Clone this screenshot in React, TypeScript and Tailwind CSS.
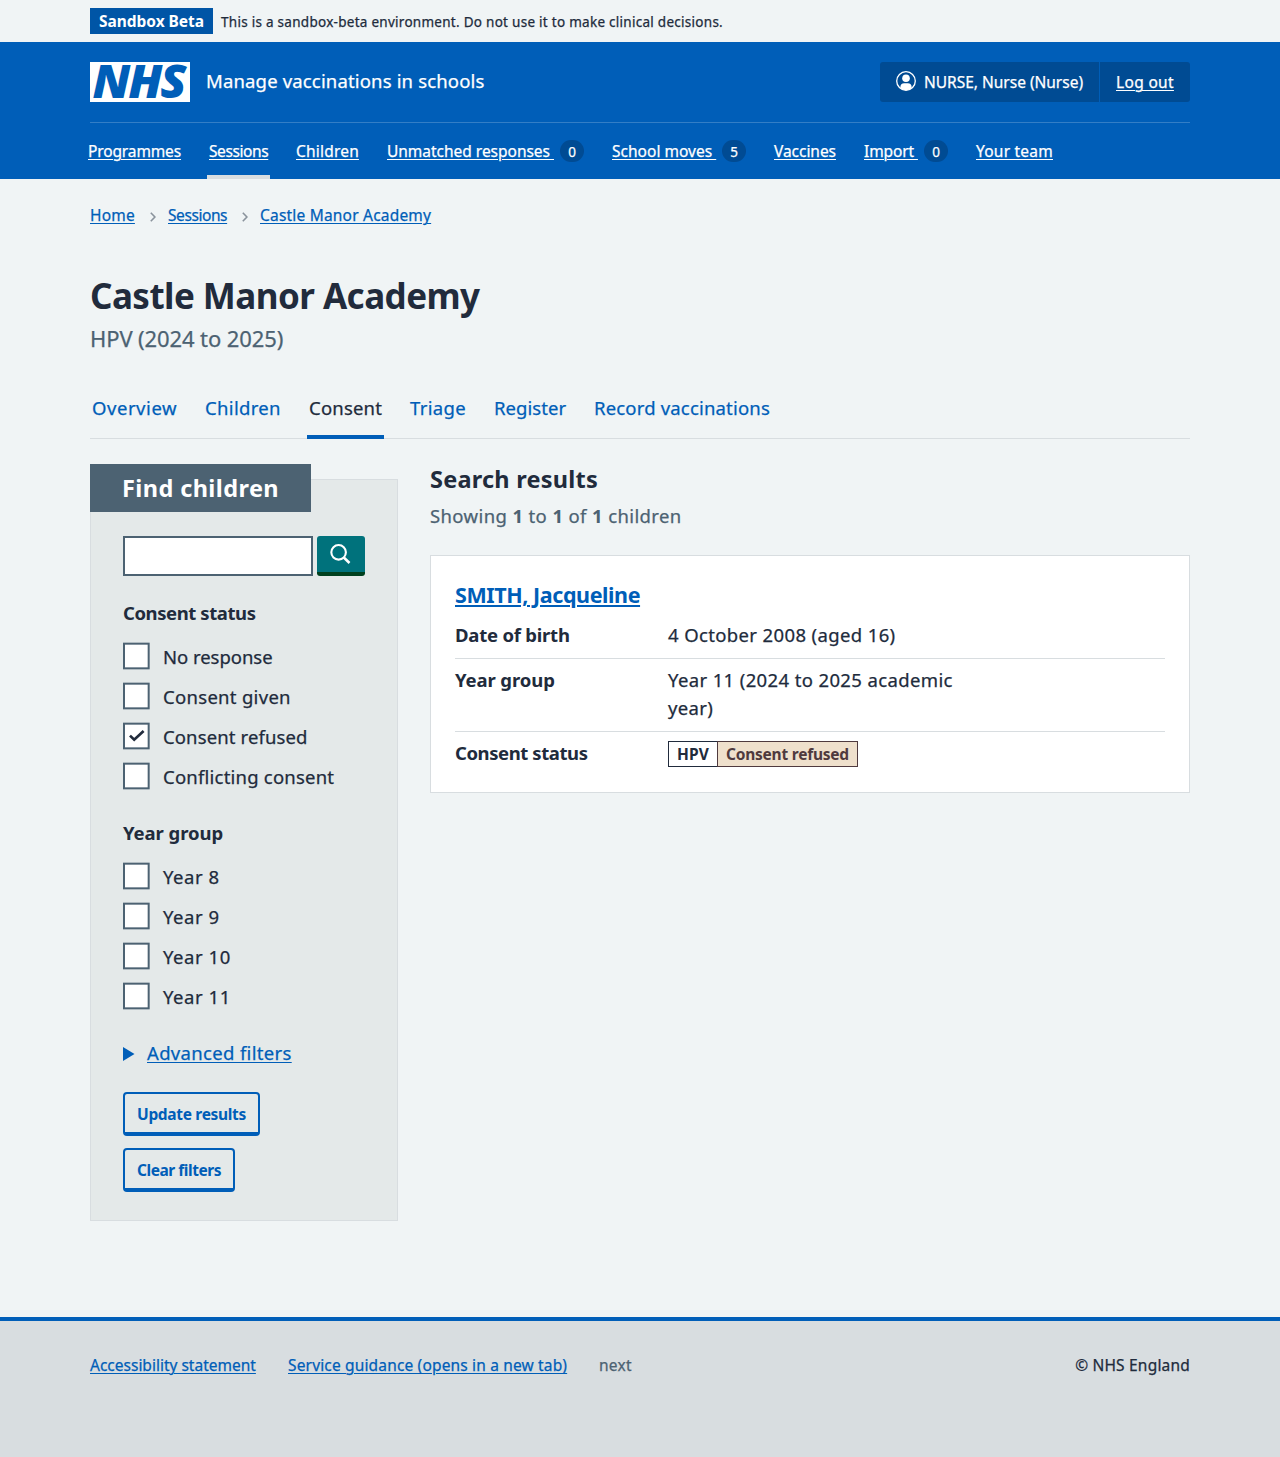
import type { ReactNode } from "react";

type NavItem = { label: string; cls: string; width: string; count?: number; current?: boolean };

const NAV: NavItem[] = [
  { label: "Programmes", cls: "tracking-[-0.13px]", width: "w-[97px]" },
  { label: "Sessions", cls: "tracking-[-0.4px]", width: "w-[63px]", current: true },
  { label: "Children", cls: "tracking-[0.2px]", width: "w-[67px]" },
  { label: "Unmatched responses\u00a0", cls: "tracking-[-0.02px]", width: "w-[201px]", count: 0 },
  { label: "School moves\u00a0", cls: "tracking-[0.02px]", width: "w-[138px]", count: 5 },
  { label: "Vaccines", cls: "tracking-[-0.04px]", width: "w-[66px]" },
  { label: "Import\u00a0", cls: "tracking-[-0.11px]", width: "w-[88px]", count: 0 },
  { label: "Your team", cls: "tracking-[0.23px]", width: "w-[81px]" },
];

const TABS = [
  { label: "Overview", cls: "w-[89px] tracking-[0.55px]" },
  { label: "Children", cls: "w-[80px] tracking-[0.33px]" },
  { label: "Consent", cls: "w-[77px] tracking-[0.2px]", current: true },
  { label: "Triage", cls: "w-[60px] tracking-[0.34px]" },
  { label: "Register", cls: "w-[76px] tracking-[0.05px]" },
  { label: "Record vaccinations", cls: "w-[180px] tracking-[0.18px]" },
];

const STATUSES = [
  { label: "No response", cls: "tracking-[-0.03px]" },
  { label: "Consent given", cls: "tracking-[0.3px]" },
  { label: "Consent refused", cls: "tracking-[0.12px]", checked: true },
  { label: "Conflicting consent", cls: "tracking-[0.22px]" },
];

const YEARS = ["Year 8", "Year 9", "Year 10", "Year 11"].map((label) => ({
  label,
  cls: "tracking-[0.55px]",
  checked: false,
}));

const link = "underline decoration-1 underline-offset-2";

function Container({ children, className = "" }: { children: ReactNode; className?: string }) {
  return <div className={`mx-auto w-[1100px] ${className}`}>{children}</div>;
}

function NhsLogo() {
  return (
    <svg width="100" height="40" viewBox="0 0 100 40" role="img" aria-label="NHS" className="bg-white">
      <text
        x="2.5"
        y="36.4"
        fontFamily="'Open Sans', sans-serif"
        fontWeight="800"
        fontStyle="italic"
        fontSize="46"
        letterSpacing="-2"
        textLength="92"
        lengthAdjust="spacingAndGlyphs"
        fill="#005eb8"
      >
        NHS
      </text>
    </svg>
  );
}

function Checkbox({ label, cls, checked }: { label: string; cls: string; checked?: boolean }) {
  return (
    <label className="flex h-10 items-center">
      <svg width="28" height="28" viewBox="0 0 28 28" className="-ml-px mb-[2px] shrink-0">
        <rect x="2" y="1.67" width="24.67" height="24.67" fill="#fff" stroke="#4c6272" strokeWidth="2" />
        {checked && <path d="M8 13.6l4.2 4.1L21.6 9" fill="none" stroke="#212b3c" strokeWidth="2.7" />}
      </svg>
      <span className={`ml-[13px] text-[18.5px] leading-7 ${cls}`}>{label}</span>
    </label>
  );
}

function CheckboxGroup({ title, cls, items }: { title: string; cls: string; items: { label: string; cls: string; checked?: boolean }[] }) {
  return (
    <fieldset className="mb-[22px]">
      <legend className={`mb-[10px] text-[18.5px] font-bold leading-7 ${cls}`}>{title}</legend>
      {items.map((item) => (
        <Checkbox key={item.label} {...item} />
      ))}
    </fieldset>
  );
}

function SummaryRow({ term, cls, last, children }: { term: string; cls: string; last?: boolean; children: ReactNode }) {
  return (
    <div className={`flex text-[18.5px] leading-7 ${last ? "" : "border-b border-[#d8dde0] pb-[9px]"}`}>
      <dt className={`w-[213px] font-bold ${cls}`}>{term}</dt>
      <dd className="w-[298px]">{children}</dd>
    </div>
  );
}

export default function App() {
  return (
    <div className="flex min-h-[1457px] flex-col whitespace-nowrap bg-[#f0f4f5] font-['Noto_Sans',sans-serif] text-[#212b3c] [-webkit-text-stroke:0.25px] [&_.font-bold]:[-webkit-text-stroke:0px]">
      <Container className="flex h-[42px] items-center">
        <strong className="flex h-[26px] w-[123px] items-center justify-center bg-[#0055a6] pt-0.5 text-[15.5px] font-bold tracking-[-0.03px] text-white">
          Sandbox Beta
        </strong>
        <span className="ml-2 mt-px text-[13.5px] leading-5 tracking-[0.275px]">
          This is a sandbox-beta environment. Do not use it to make clinical decisions.
        </span>
      </Container>

      <header className="h-[137px] bg-[#005eb8] text-white">
        <Container className="flex h-20 items-center">
          <NhsLogo />
          <span className="mb-[3px] ml-4 text-[18.5px] leading-7 tracking-[0.16px]">Manage vaccinations in schools</span>
          <div className="ml-auto flex h-10 items-center rounded-[3px] bg-[#004b93] text-[15.5px]">
            <div className="flex h-full w-[220px] items-center border-r border-[#005eb8] pl-4">
              <svg width="20" height="20" viewBox="0 0 20 20" className="mb-[3px]">
                <circle cx="10" cy="10" r="9.3" fill="none" stroke="#fff" strokeWidth="1.3" />
                <circle cx="10" cy="7.3" r="3.8" fill="#fff" />
                <path d="M4.4 17.2V16a3.8 3.8 0 0 1 3.8-3.8h3.6A3.8 3.8 0 0 1 15.6 16v1.2A9 9 0 0 1 10 19.2a9 9 0 0 1-5.6-2Z" fill="#fff" />
              </svg>
              <span className="ml-2 pt-0.5 tracking-[-0.01px]">NURSE, Nurse (Nurse)</span>
            </div>
            <a className={`w-[90px] pl-4 pt-0.5 tracking-[0.33px] ${link}`}>Log out</a>
          </div>
        </Container>
        <Container>
          <nav className="flex h-[57px] gap-6 border-t border-[#337ec6] text-[15.5px]">
            {NAV.map((item, i) => (
              <div
                key={item.label}
                className={`flex h-14 shrink-0 items-center px-0.5 ${item.width} ${i === 0 ? "-ml-1" : ""} ${
                  item.current ? "border-b-4 border-[#d8dde0] pt-1" : ""
                }`}
              >
                <a className={`pt-0.5 ${link} ${item.cls}`}>{item.label}</a>
                {item.count !== undefined && (
                  <span className="ml-auto flex h-[22px] w-6 items-center justify-center rounded-full bg-[#004b93] pt-0.5 text-[13.5px]">
                    {item.count}
                  </span>
                )}
              </div>
            ))}
          </nav>
        </Container>
      </header>

      <Container>
        <nav className="mt-[25px] flex h-6 items-center text-[15.5px] text-[#005eb8]">
          <a className={`w-[45px] tracking-[0.2px] ${link}`}>Home</a>
          <Chevron />
          <a className={`w-[59px] tracking-[-0.42px] ${link}`}>Sessions</a>
          <Chevron />
          <a className={`tracking-[0.2px] ${link}`}>Castle Manor Academy</a>
        </nav>

        <h1 className="mt-[43px] text-[35px] font-bold leading-[50px] tracking-[-0.54px]">Castle Manor Academy</h1>
        <p className="mt-px text-[22px] leading-8 tracking-[-0.11px] text-[#4c6272]">HPV (2024 to 2025)</p>

        <nav className="mt-[23px] flex h-[62px] gap-6 border-b border-[#d8dde0] text-[18.5px] text-[#005eb8]">
          {TABS.map((tab) => (
            <a
              key={tab.label}
              className={`h-[62px] px-0.5 leading-[61px] ${tab.cls} ${
                tab.current ? "border-b-4 border-[#005eb8] text-[#212b3c]" : ""
              }`}
            >
              {tab.label}
            </a>
          ))}
        </nav>

        <main className="mt-[25px] flex items-start gap-8">
          <section className="mt-[15px] h-[742px] w-[308px] border border-[#d8dde0] bg-[#e4e9e9] px-8">
            <h2 className="-ml-[33px] -mt-4 flex h-12 w-[221px] items-center bg-[#4c6272] pl-8 pt-0.5 text-[23.5px] font-bold tracking-[0.4px] text-white">
              Find children
            </h2>
            <div className="mb-[23px] mt-6 flex gap-1">
              <input aria-label="Search" className="h-10 w-[190px] border-2 border-[#4c6272] bg-white" />
              <button aria-label="Search" className="flex h-10 w-12 justify-center rounded-[3px] border-b-4 border-[#00401e] bg-[#00727c] pt-[6.5px]">
                <svg width="22" height="22" viewBox="0 0 22 22" className="-ml-[2px]" fill="none" stroke="#fff" strokeWidth="2.1">
                  <circle cx="9.6" cy="9.3" r="7.3" />
                  <path d="M14.8 14.5l5.7 5.5" strokeWidth="2.6" />
                </svg>
              </button>
            </div>
            <CheckboxGroup title="Consent status" cls="tracking-[-0.42px]" items={STATUSES} />
            <CheckboxGroup title="Year group" cls="tracking-[-0.07px]" items={YEARS} />
            <div className="flex h-7 items-center text-[18.5px] text-[#005eb8]">
              <svg width="12" height="14" viewBox="0 0 12 14" className="mt-0.5">
                <path d="M0 0l11.500 7-11.500 7z" fill="currentColor" />
              </svg>
              <span className={`ml-3 tracking-[0.33px] ${link}`}>Advanced filters</span>
            </div>
            <div className="mt-[25px] flex flex-col items-start gap-3 text-[15.5px] font-bold text-[#005eb8]">
              <button className="h-11 w-[137px] rounded-[4px] border-2 border-b-4 border-[#005eb8] pl-3 pt-[3px] text-left tracking-[-0.32px]">
                Update results
              </button>
              <button className="h-11 w-[112px] rounded-[4px] border-2 border-b-4 border-[#005eb8] pl-3 pt-[3px] text-left tracking-[-0.46px]">
                Clear filters
              </button>
            </div>
          </section>

          <section className="w-[760px]">
            <h2 className="text-[23.5px] font-bold leading-[30px] tracking-[0.23px]">Search results</h2>
            <p className="mt-2 text-[18.5px] leading-7 tracking-[0.38px] text-[#4c6272]">
              Showing <b className="font-bold">1</b> to <b className="font-bold">1</b> of <b className="font-bold">1</b> children
            </p>
            <article className="mt-[25px] h-[238px] border border-[#d8dde0] bg-white px-6 pt-[23px]">
              <h3 className="mb-2.5 text-[21.5px] font-bold leading-8 tracking-[-0.42px] text-[#005eb8]">
                <a className="underline decoration-2 underline-offset-2">SMITH, Jacqueline</a>
              </h3>
              <dl className="flex flex-col gap-[7px]">
                <SummaryRow term="Date of birth" cls="tracking-[-0.22px]">
                  <span className="tracking-[0.37px]">4 October 2008 (aged 16)</span>
                </SummaryRow>
                <SummaryRow term="Year group" cls="tracking-[-0.1px]">
                  <p className="whitespace-normal tracking-[0.37px]">Year 11 (2024 to 2025 academic year)</p>
                </SummaryRow>
                <SummaryRow term="Consent status" cls="tracking-[-0.42px]" last>
                  <div className="mt-[2px] flex text-[15.5px] font-bold leading-6">
                    <span className="h-[26px] w-[49px] border border-r-0 border-[#212b3c] pl-2 tracking-[0.1px]">HPV</span>
                    <span className="h-[26px] w-[141px] border border-[#4f3a3e] bg-[#efe0cc] pl-2 tracking-[-0.23px] text-[#4f3a3e]">
                      Consent refused
                    </span>
                  </div>
                </SummaryRow>
              </dl>
            </article>
          </section>
        </main>
      </Container>

      <footer className="mt-24 h-[140px] border-t-4 border-[#005eb8] bg-[#d8dde0] pt-8 text-[15.5px] leading-6">
        <Container className="flex text-[#005eb8]">
          <a className={`w-[198px] ${link}`}>Accessibility statement</a>
          <a className={`w-[279px] tracking-[0.16px] ${link}`}>Service guidance (opens in a new tab)</a>
          <span className="ml-8 tracking-[0.29px] text-[#4c6272]">next</span>
          <span className="ml-auto tracking-[0.2px] text-[#212b3c]">© NHS England</span>
        </Container>
      </footer>
    </div>
  );
}

function Chevron() {
  return (
    <svg width="6" height="10" viewBox="0 0 6 10" className="ml-[15px] mr-3 mt-px" fill="none" stroke="#8a939c" strokeWidth="1.6">
      <path d="M.8.8L4.9 5 .8 9.2" />
    </svg>
  );
}
